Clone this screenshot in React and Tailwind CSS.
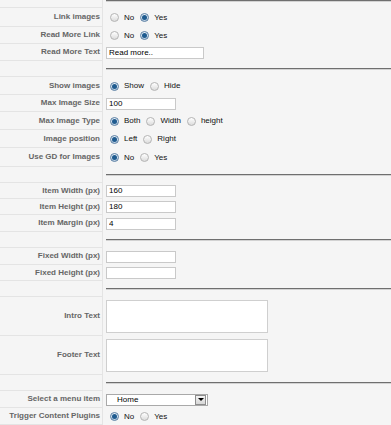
// App.jsx — parameter list (Joomla-style admin params table)

const font = { fontFamily: '"Liberation Sans", Arial, sans-serif' };

function Radio({ checked }) {
  return (
    <span
      className={`inline-flex items-center justify-center w-[9px] h-[9px] rounded-full border shrink-0 ${
        checked
          ? 'border-[#5a7fa3] bg-gradient-to-b from-[#e8f0f8] to-[#b9cde0]'
          : 'border-[#b4b4b4] bg-gradient-to-b from-[#ffffff] to-[#dcdcdc]'
      }`}
    >
      {checked && <span className="w-[5px] h-[5px] rounded-full bg-[#1f5b8f]" />}
    </span>
  );
}

function Radios({ options, value }) {
  return (
    <div className="flex items-center pl-[4px]">
      {options.map((opt) => (
        <span key={opt} className="flex items-center mr-[6px]">
          <Radio checked={opt === value} />
          <span className="ml-[5px] text-[8px] text-[#111]">{opt}</span>
        </span>
      ))}
    </div>
  );
}

function TextInput({ value = '', w = 'w-[70px]' }) {
  return (
    <input
      readOnly
      value={value}
      className={`${w} h-[12px] border border-[#c9c9c9] bg-white px-[2px] text-[8px] text-black outline-none`}
      style={font}
    />
  );
}

function TextArea() {
  return <div className="w-[162px] h-[33px] border border-[#cfcfcf] bg-white" />;
}

function Select() {
  return (
    <div className="flex items-center w-[102px] h-[12px] border border-[#a9a9a9] bg-white">
      <span className="flex-1 pl-[10px] text-[8px] text-black">Home</span>
      <span className="flex items-center justify-center w-[11px] h-[10px] mr-[1px] border border-[#8d8d8d] bg-gradient-to-b from-[#f4f4f4] to-[#d6d6d6]">
        <span className="w-0 h-0 border-l-[3px] border-r-[3px] border-t-[3px] border-l-transparent border-r-transparent border-t-black" />
      </span>
    </div>
  );
}

function Row({ label, h, children }) {
  return (
    <div className="flex" style={{ height: h }}>
      <div className="w-[103px] shrink-0 flex items-center justify-end pr-[2px] border-r border-b border-[#e4e4e4] text-[8px] font-bold text-[#666]">
        {label}
      </div>
      <div className="flex-1 flex items-center pl-[3px]">{children}</div>
    </div>
  );
}

function Spacer({ h = 16, top = false }) {
  return (
    <div className="flex" style={{ height: h }}>
      <div className="w-[103px] shrink-0 border-r border-b border-[#e4e4e4]" />
      <div className={`flex-1 flex ${top ? 'items-start' : 'items-center'} pl-[3px]`}>
        <div className="w-full h-[2px] border-t border-[#6f6f6f] border-b border-b-[#d2d2d2]" />
      </div>
    </div>
  );
}

export default function App() {
  return (
    <div className="w-[391px] h-[425px] overflow-hidden bg-[#f5f5f5]" style={font}>
      <Spacer h={8} top />
      <Row label="Link images" h={19}><Radios options={['No', 'Yes']} value="Yes" /></Row>
      <Row label="Read More Link" h={17}><Radios options={['No', 'Yes']} value="Yes" /></Row>
      <Row label="Read More Text" h={17}><TextInput value="Read more.." w="w-[98px]" /></Row>
      <Spacer />
      <Row label="Show images" h={18}><Radios options={['Show', 'Hide']} value="Show" /></Row>
      <Row label="Max Image Size" h={17}><TextInput value="100" /></Row>
      <Row label="Max Image Type" h={18}><Radios options={['Both', 'Width', 'height']} value="Both" /></Row>
      <Row label="Image position" h={18}><Radios options={['Left', 'Right']} value="Left" /></Row>
      <Row label="Use GD for Images" h={19}><Radios options={['No', 'Yes']} value="No" /></Row>
      <Spacer />
      <Row label="Item Width (px)" h={16}><TextInput value="160" /></Row>
      <Row label="Item Height (px)" h={16}><TextInput value="180" /></Row>
      <Row label="Item Margin (px)" h={17}><TextInput value="4" /></Row>
      <Spacer />
      <Row label="Fixed Width (px)" h={17}><TextInput /></Row>
      <Row label="Fixed Height (px)" h={16}><TextInput /></Row>
      <Spacer />
      <Row label="Intro Text" h={39}><TextArea /></Row>
      <Row label="Footer Text" h={39}><TextArea /></Row>
      <Spacer />
      <Row label="Select a menu item" h={17}><Select /></Row>
      <Row label="Trigger Content Plugins" h={17}><Radios options={['No', 'Yes']} value="No" /></Row>
    </div>
  );
}
